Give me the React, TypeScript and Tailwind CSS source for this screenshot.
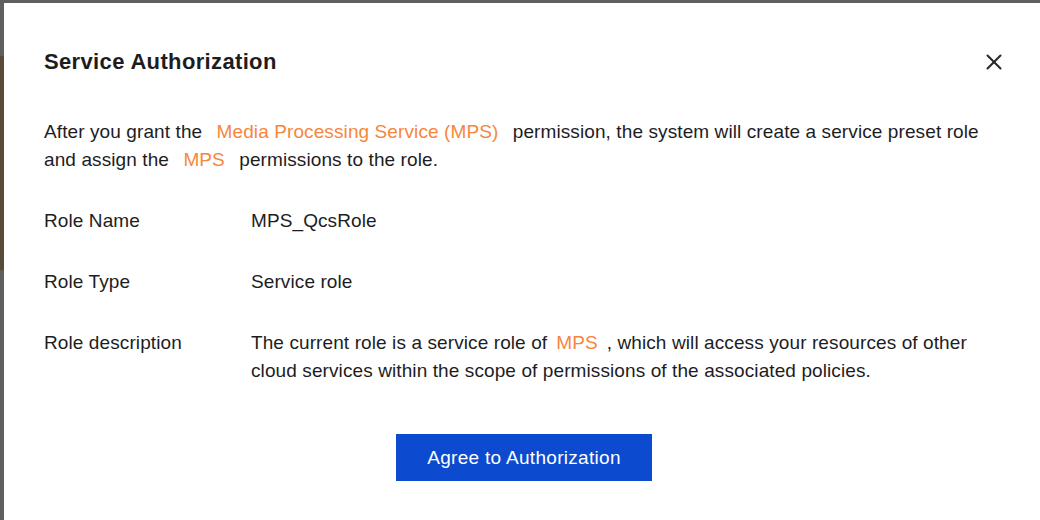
import { X } from "lucide-react";

const orange = "px-[9px] text-[#f7863d]";

function Row({ label, children }: { label: string; children: React.ReactNode }) {
  return (
    <div className="flex">
      <div className="w-[207px] shrink-0">{label}</div>
      <div className="flex-1">{children}</div>
    </div>
  );
}

export default function App() {
  return (
    <div
      className="flex h-[520px] w-[1040px] flex-col overflow-hidden bg-[#5f5f5f]"
      style={{ fontFamily: '"Liberation Sans", Arial, sans-serif' }}
    >
      <div className="h-[3px] shrink-0" />
      <div className="flex flex-1">
        {/* backdrop strip at the left */}
        <div className="flex w-[4px] shrink-0 flex-col">
          <div className="h-[53px] bg-[#5f5f5f]" />
          <div className="h-[214px] bg-[#5a4a38]" />
          <div className="flex-1 bg-[#5f5f5f]" />
        </div>

        <div className="flex-1 bg-white pl-[40px] pr-[33px] pt-[45px] text-[19px] leading-[28px] tracking-[0.1px] text-[#1d1d1f]">
          <div className="flex items-center justify-between">
            <h2 className="text-[22px] font-bold tracking-[0.35px]">Service Authorization</h2>
            <button className="text-[#2a2a2a]">
              <X size={26} strokeWidth={1.9} />
            </button>
          </div>

          <p className="mt-[42px] whitespace-nowrap">
            After you grant the <span className={orange}>Media Processing Service (MPS)</span> permission, the
            system will create a service preset role
            <br />
            and assign the <span className={orange}>MPS</span> permissions to the role.
          </p>

          <div className="mt-[33px] flex flex-col gap-[33px]">
            <Row label="Role Name">MPS_QcsRole</Row>
            <Row label="Role Type">Service role</Row>
            <Row label="Role description">
              <span className="whitespace-nowrap">
                The current role is a service role of<span className={orange}>MPS</span>, which will access your
                resources of other
                <br />
                cloud services within the scope of permissions of the associated policies.
              </span>
            </Row>
          </div>

          <div className="mt-[49px] flex justify-center pr-[3px]">
            <button className="h-[47px] w-[256px] bg-[#0c4acf] text-[19px] tracking-[0.3px] text-white">
              Agree to Authorization
            </button>
          </div>
        </div>
      </div>
    </div>
  );
}
